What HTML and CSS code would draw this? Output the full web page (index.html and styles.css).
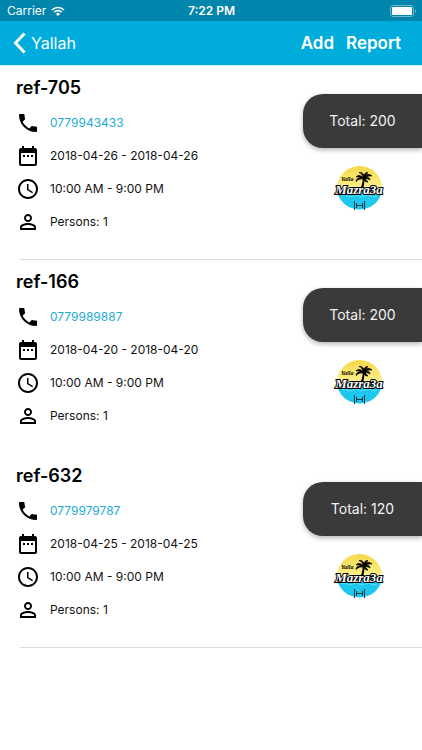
FILE: index.html
```
<!DOCTYPE html>
<html lang="en">
<head>
    <meta charset="UTF-8">
    <meta name="viewport" content="width=device-width, initial-scale=1.0">
    <title>Yallah Mazra3a</title>
    <link rel="stylesheet" href="styles.css">
</head>
<body>
    <!-- Shared icons -->
    <svg class="sprite" aria-hidden="true">
        <symbol id="phone" viewBox="0 0 24 24">
            <path d="M6.62 10.79c1.44 2.83 3.76 5.14 6.59 6.59l2.2-2.2c.27-.27.67-.36 1.02-.24 1.12.37 2.33.57 3.57.57.55 0 1 .45 1 1V20c0 .55-.45 1-1 1-9.39 0-17-7.61-17-17 0-.55.45-1 1-1h3.5c.55 0 1 .45 1 1 0 1.25.2 2.45.57 3.57.11.35.03.74-.25 1.02l-2.2 2.2z"/>
        </symbol>
        <symbol id="calendar" viewBox="0 0 24 24">
            <path d="M9 11H7v2h2v-2zm4 0h-2v2h2v-2zm4 0h-2v2h2v-2zm2-7h-1V2h-2v2H8V2H6v2H5c-1.11 0-1.99.9-1.99 2L3 20c0 1.1.89 2 2 2h14c1.1 0 2-.9 2-2V6c0-1.1-.9-2-2-2zm0 16H5V9h14v11z"/>
        </symbol>
        <symbol id="clock" viewBox="0 0 24 24">
            <path d="M11.99 2C6.47 2 2 6.48 2 12s4.47 10 9.99 10C17.52 22 22 17.52 22 12S17.52 2 11.99 2zM12 20c-4.42 0-8-3.58-8-8s3.58-8 8-8 8 3.58 8 8-3.58 8-8 8zm.5-13H11v6l5.25 3.15.75-1.23-4.5-2.67z"/>
        </symbol>
        <symbol id="person" viewBox="0 0 24 24">
            <path d="M12 5.9c1.16 0 2.1.94 2.1 2.1s-.94 2.1-2.1 2.1S9.9 9.16 9.9 8s.94-2.1 2.1-2.1m0 9c2.97 0 6.1 1.46 6.1 2.1v1.1H5.9V17c0-.64 3.13-2.1 6.1-2.1M12 4C9.79 4 8 5.79 8 8s1.79 4 4 4 4-1.79 4-4-1.79-4-4-4zm0 9c-2.67 0-8 1.34-8 4v3h16v-3c0-2.66-5.33-4-8-4z"/>
        </symbol>
        <linearGradient id="sky" x1="0" y1="0" x2="0" y2="1">
            <stop offset="0" stop-color="#f5d848"/>
            <stop offset="1" stop-color="#fdf08c"/>
        </linearGradient>
        <symbol id="beach" viewBox="0 0 52 46">
            <path d="M4 24a22.5 22 0 0 1 45 0z" fill="url(#sky)"/>
            <path d="M4 24h45a22.5 21.5 0 0 1-45 0z" fill="#1cc8ee"/>
            <path d="M8 32q3-2 6 0t6 0 6 0 6 0 6 0 6 0" fill="none" stroke="#5bdcf5" stroke-width="1"/>
            <path d="M29.5 13c.5 3 0 6-1.5 10h2.5c1-4 1-7 0-10z"/>
            <path d="M30 14c-2-3-5-3-7-1 2-.5 4-.5 5 .5-3 0-5 2-5 4 2-2 4-3 7-2.5 1 2 3 3 5 3-1-1-2-2-3-3 2-.5 4 0 5 1 0-2-2-3-4-3 2-1 4-1.5 6-1-2-2-5-2-6-.5 0-1 1-2.5 2-3-2.5 0-4 1.500-4 3-.5-2-2.5-3.5-5-3 2 .5 3.5 2 4 5z" stroke="#000" stroke-width="0.8"/>
            <path d="M21.5 37v9M31.5 37v9M23.5 39v5M29.5 39v5M23.5 41.5h6" fill="none" stroke="#123743" stroke-width="1"/>
        </symbol>
    </svg>

    <header>
        <div class="status">
            <div class="carrier">
                <span>Carrier</span>
                <svg class="wifi" viewBox="0 0 14 10">
                    <path d="M1 4a8.5 8.5 0 0 1 12 0M3.2 6.2a5.4 5.4 0 0 1 7.6 0" fill="none" stroke="#fff" stroke-width="1.7"/>
                    <path d="M7 10L4.9 7.9a3 3 0 0 1 4.2 0z" fill="#fff"/>
                </svg>
            </div>
            <span class="time">7:22 PM</span>
            <svg class="battery" viewBox="0 0 26 12">
                <rect x="0.5" y="0.5" width="23" height="11" rx="2.5" fill="none" stroke="#6bb8cf"/>
                <rect x="2" y="2" width="20" height="8" rx="1" fill="#fff"/>
                <path d="M25 4v4q1-.5 1-2t-1-2z" fill="#6bb8cf"/>
            </svg>
        </div>
        <nav>
            <a class="back" href="#">
                <svg viewBox="0 0 13 22"><path d="M11.5 1.5L2.5 11l9 9.5" fill="none" stroke="#fff" stroke-width="3"/></svg>
                Yallah
            </a>
            <div class="actions">
                <button type="button">Add</button>
                <button type="button">Report</button>
            </div>
        </nav>
    </header>

    <main>
        <article class="booking lined">
            <div class="details">
                <h2>ref-705</h2>
                <ul>
                    <li><svg><use href="#phone"/></svg><a href="tel:0779943433">0779943433</a></li>
                    <li><svg><use href="#calendar"/></svg>2018-04-26 - 2018-04-26</li>
                    <li><svg><use href="#clock"/></svg>10:00 AM - 9:00 PM</li>
                    <li><svg><use href="#person"/></svg>Persons: 1</li>
                </ul>
            </div>
            <div class="side">
                <div class="total">Total: 200</div>
                <svg class="logo" viewBox="0 0 52 46">
                    <use href="#beach"/>
                    <text class="logo-small" x="8" y="17">Yalla</text>
                    <text class="logo-name" x="26" y="30" text-anchor="middle">Mazra3a</text>
                </svg>
            </div>
        </article>

        <article class="booking">
            <div class="details">
                <h2>ref-166</h2>
                <ul>
                    <li><svg><use href="#phone"/></svg><a href="tel:0779989887">0779989887</a></li>
                    <li><svg><use href="#calendar"/></svg>2018-04-20 - 2018-04-20</li>
                    <li><svg><use href="#clock"/></svg>10:00 AM - 9:00 PM</li>
                    <li><svg><use href="#person"/></svg>Persons: 1</li>
                </ul>
            </div>
            <div class="side">
                <div class="total">Total: 200</div>
                <svg class="logo" viewBox="0 0 52 46">
                    <use href="#beach"/>
                    <text class="logo-small" x="8" y="17">Yalla</text>
                    <text class="logo-name" x="26" y="30" text-anchor="middle">Mazra3a</text>
                </svg>
            </div>
        </article>

        <article class="booking lined">
            <div class="details">
                <h2>ref-632</h2>
                <ul>
                    <li><svg><use href="#phone"/></svg><a href="tel:0779979787">0779979787</a></li>
                    <li><svg><use href="#calendar"/></svg>2018-04-25 - 2018-04-25</li>
                    <li><svg><use href="#clock"/></svg>10:00 AM - 9:00 PM</li>
                    <li><svg><use href="#person"/></svg>Persons: 1</li>
                </ul>
            </div>
            <div class="side">
                <div class="total">Total: 120</div>
                <svg class="logo" viewBox="0 0 52 46">
                    <use href="#beach"/>
                    <text class="logo-small" x="8" y="17">Yalla</text>
                    <text class="logo-name" x="26" y="30" text-anchor="middle">Mazra3a</text>
                </svg>
            </div>
        </article>
    </main>
</body>
</html>
```

FILE: styles.css
```
* {
    box-sizing: border-box;
}

body {
    margin: 0;
    background: white;
    color: #111;
    font-family: Inter, "Liberation Sans", sans-serif;
}

.sprite {
    position: absolute;
    width: 0;
    height: 0;
}

header {
    background: #00acdc;
    color: white;
    border-bottom: 1px solid #d5f3fb;
}

.status {
    display: grid;
    grid-template-columns: 1fr auto 1fr;
    align-items: center;
    height: 21px;
    padding: 0 6px 0 7px;
    background: #0085ac;
    font-size: 12px;
}

.carrier {
    display: flex;
    align-items: center;
    gap: 5px;
}

.wifi {
    width: 14px;
    height: 10px;
}

.time {
    font-weight: 600;
}

.battery {
    width: 26px;
    height: 12px;
    justify-self: end;
}

nav {
    display: flex;
    align-items: center;
    justify-content: space-between;
    height: 44px;
    padding: 0 21px 0 13px;
}

.back {
    display: flex;
    align-items: center;
    gap: 5px;
    color: white;
    font-size: 16px;
    text-decoration: none;
}

.back svg {
    width: 13px;
    height: 22px;
}

.actions {
    display: flex;
    gap: 12px;
}

.actions button {
    padding: 0;
    border: none;
    background: none;
    color: white;
    font-family: inherit;
    font-size: 17px;
    font-weight: 600;
    cursor: pointer;
}

.booking {
    display: flex;
    justify-content: space-between;
    min-height: 194px;
    padding: 10px 0 20px 16px;
}

/* Divider starts a little in from the left edge */
.lined {
    background: linear-gradient(#dedede, #dedede) 20px 100% / 100% 1px no-repeat;
}

.booking h2 {
    margin: 0 0 6px;
    font-size: 18px;
    line-height: 24px;
    font-weight: 600;
    color: black;
}

.booking ul {
    margin: 0;
    padding: 0;
    list-style: none;
}

.booking li {
    display: flex;
    align-items: center;
    gap: 10px;
    height: 33px;
    font-size: 12px;
}

.booking li svg {
    width: 24px;
    height: 24px;
    fill: black;
}

.booking li a {
    color: #22abd6;
    text-decoration: none;
}

.side {
    display: flex;
    flex-direction: column;
    align-items: center;
    width: 119px;
    padding-top: 18px;
}

.total {
    width: 100%;
    height: 54px;
    border-radius: 20px 0 0 20px;
    background: #3a3a3a;
    box-shadow: 0 2px 5px rgba(0, 0, 0, 0.3);
    color: #f2f2f2;
    font-size: 14px;
    line-height: 54px;
    text-align: center;
}

.logo {
    width: 52px;
    height: 46px;
    margin-top: 16px;
    margin-right: 8px;
}

.logo-small {
    font: italic bold 6px "Liberation Serif", serif;
}

.logo-name {
    font: italic bold 13px "Liberation Serif", serif;
    fill: white;
    stroke: black;
    stroke-width: 2px;
    paint-order: stroke;
}
```
